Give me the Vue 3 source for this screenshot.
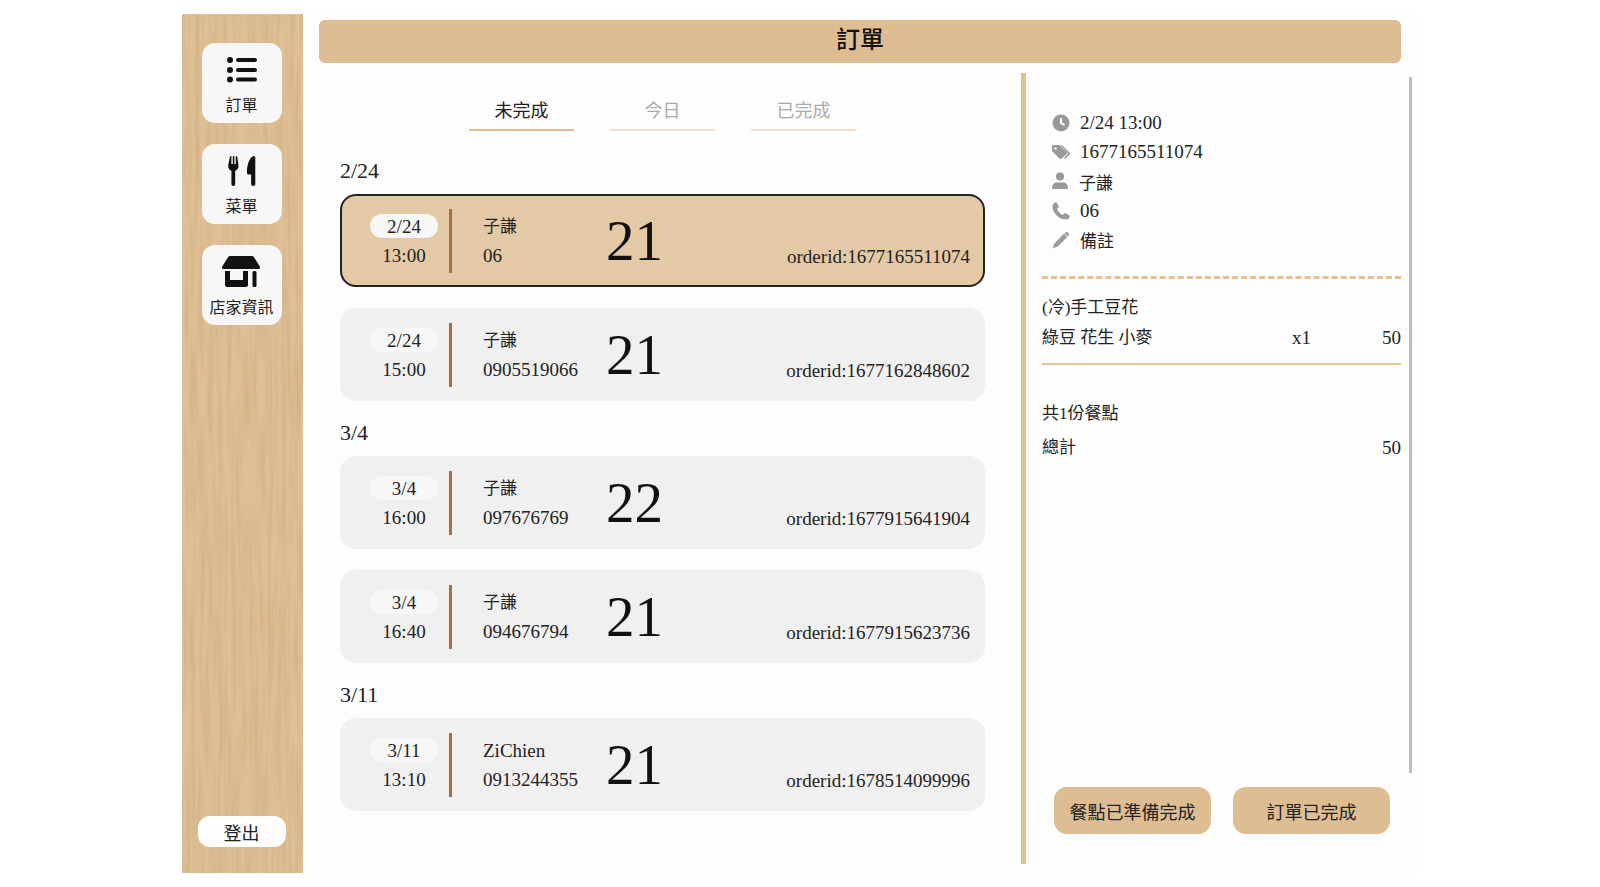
<template>
  <div class="page">
    <div class="frame">
      <aside class="sidebar">
        <svg class="grain" width="121" height="859">
          <filter id="wood">
            <feTurbulence type="fractalNoise" baseFrequency="0.22 0.012" numOctaves="3" seed="4" />
            <feColorMatrix values="0 0 0 0 0.55  0 0 0 0 0.36  0 0 0 0 0.16  0.9 0 0 0 -0.32" />
          </filter>
          <rect width="121" height="859" filter="url(#wood)" />
        </svg>
        <div class="nav-item">
          <svg class="nav-icon" viewBox="0 0 40 34">
            <g transform="translate(0 -1)">
              <circle cx="8" cy="7" r="3" />
              <circle cx="8" cy="17" r="3" />
              <circle cx="8" cy="26.5" r="3" />
              <rect x="14" y="5" width="21" height="4" rx="2" />
              <rect x="14" y="15" width="21" height="4" rx="2" />
              <rect x="14" y="24.5" width="21" height="4" rx="2" />
            </g>
          </svg>
          <span>訂單</span>
        </div>
        <div class="nav-item">
          <svg class="nav-icon" viewBox="0 0 40 34">
            <path d="M8 1.500c0-.8 1.400-.8 1.400 0V9h1.400V1.500c0-.8 1.600-.8 1.600 0V9h1.400V1.500c0-.8 1.400-.8 1.400 0l1.300 9c.3 2.600-1.100 4.400-3.300 5.300V29a1.900 1.900 0 0 1-3.800 0V15.800c-2.200-.9-3.500-2.700-3.200-5.300z" />
            <path d="M31.500 1c1 0 1.800.7 1.800 1.700V29a2.100 2.100 0 0 1-4.200 0V19.500h-2.400c-1.100 0-1.800-.7-1.800-1.800C25 9 27.500 2.500 31.500 1z" />
          </svg>
          <span>菜單</span>
        </div>
        <div class="nav-item">
          <svg class="nav-icon" viewBox="0 0 40 34">
            <g transform="translate(-1 -2)">
              <path d="M9 2h22c.8 0 1.400.4 1.800 1l6 9.500c.6 1 .2 2.500-1.300 2.500H2.500C1 15 .6 13.500 1.200 12.500l6-9.500C7.600 2.400 8.200 2 9 2z" />
              <path d="M4 17h5v9h13v-9h5v14c0 1.200-.8 2-2 2H6c-1.200 0-2-.8-2-2z" />
              <rect x="31.500" y="17" width="4" height="16" rx="1.500" />
            </g>
          </svg>
          <span>店家資訊</span>
        </div>
        <button class="logout">登出</button>
      </aside>

      <main class="main">
        <header class="title">訂單</header>
        <div class="content">
          <section class="orders">
            <div class="tabs">
              <div
                v-for="tab in tabs"
                :key="tab"
                class="tab"
                :class="{ active: tab === '未完成' }"
              >{{ tab }}</div>
            </div>

            <div v-for="group in groups" :key="group.date" class="group">
              <div class="group-date">{{ group.date }}</div>
              <div
                v-for="order in group.orders"
                :key="order.id"
                class="card"
                :class="{ selected: order.id === '1677165511074' }"
              >
                <div class="when">
                  <span class="pill">{{ group.date }}</span>
                  <span class="time">{{ order.time }}</span>
                </div>
                <div class="who">
                  <span :class="{ cjk: order.name === '子謙' }">{{ order.name }}</span>
                  <span>{{ order.phone }}</span>
                </div>
                <div class="count">{{ order.count }}</div>
                <div class="order-id">orderid:{{ order.id }}</div>
              </div>
            </div>
          </section>

          <section class="detail">
            <div class="scrollbar"></div>
            <ul class="info">
              <li>
                <svg class="info-icon" viewBox="0 0 18 18">
                  <path fill-rule="evenodd" d="M9 .5a8.500 8.500 0 1 1 0 17 8.500 8.500 0 0 1 0-17zM8 4v5.500l4 2.600 1-1.500-3-2V4z" />
                </svg>
                <span>2/24 13:00</span>
              </li>
              <li>
                <svg class="info-icon" viewBox="0 0 18 18">
                  <path fill-rule="evenodd" d="M0 3.500C0 2.700.7 2 1.500 2H7c.4 0 .8.200 1 .4l6.500 6.600c.6.600.6 1.500 0 2.100l-4.900 4.500c-.6.600-1.500.6-2.100 0L.5 8.500C.2 8.200 0 7.800 0 7.400zM3.500 4.200a1.300 1.300 0 1 0 0 2.600 1.300 1.300 0 0 0 0-2.600z" />
                  <path d="M10 2l7.500 7.600c.6.600.6 1.500 0 2.100L13 16l-1-1 4-4.400L8.500 2z" />
                </svg>
                <span>1677165511074</span>
              </li>
              <li>
                <svg class="info-icon" viewBox="0 0 18 18">
                  <circle cx="8" cy="4.500" r="4" />
                  <path d="M1 17c-.6 0-1-.4-1-1 0-3.500 2.500-5.500 5-5.500h6c2.500 0 5 2 5 5.500 0 .6-.4 1-1 1z" />
                </svg>
                <span class="cjk tight">子謙</span>
              </li>
              <li>
                <svg class="info-icon" viewBox="0 0 18 18">
                  <path d="M4.500.6l2.200 3.600c.3.500.2 1-.2 1.400L5 7c.8 2.300 3.200 4.800 5.800 6l1.500-1.500c.4-.4.9-.5 1.400-.2l3.600 2.200c.5.300.7.900.4 1.400-.8 1.600-2 2.600-3.700 2.600C7 17.500.5 11 .5 4.200.5 2.500 1.500 1.200 3.100.4c.5-.3 1.100-.1 1.400.2z" />
                </svg>
                <span>06</span>
              </li>
              <li>
                <svg class="info-icon" viewBox="0 0 18 18">
                  <path d="M12 2.800l3.200 3.200L6 15.200c-.3.300-.6.500-1 .6L.6 17.400 2.200 13c.1-.4.300-.7.600-1z" />
                  <path d="M13.200 1.600c.8-.8 2-.8 2.800 0l.4.400c.8.800.8 2 0 2.800l-.6.600-3.200-3.200z" />
                </svg>
                <span class="cjk">備註</span>
              </li>
            </ul>

            <div class="item">
              <div class="cjk">(冷)手工豆花</div>
              <div class="item-row">
                <span class="item-opts cjk">綠豆 花生 小麥</span>
                <span class="item-qty">x1</span>
                <span class="item-price">50</span>
              </div>
            </div>

            <div class="summary cjk">共1份餐點</div>
            <div class="total">
              <span class="cjk">總計</span>
              <span>50</span>
            </div>

            <div class="actions">
              <button class="action">餐點已準備完成</button>
              <button class="action">訂單已完成</button>
            </div>
          </section>
        </div>
      </main>
    </div>
  </div>
</template>

<script setup>
const tabs = ['未完成', '今日', '已完成']

const groups = [
  {
    date: '2/24',
    orders: [
      { time: '13:00', name: '子謙', phone: '06', count: 21, id: '1677165511074' },
      { time: '15:00', name: '子謙', phone: '0905519066', count: 21, id: '1677162848602' }
    ]
  },
  {
    date: '3/4',
    orders: [
      { time: '16:00', name: '子謙', phone: '097676769', count: 22, id: '1677915641904' },
      { time: '16:40', name: '子謙', phone: '094676794', count: 21, id: '1677915623736' }
    ]
  },
  {
    date: '3/11',
    orders: [
      { time: '13:10', name: 'ZiChien', phone: '0913244355', count: 21, id: '1678514099996' }
    ]
  }
]
</script>

<style>
html,
body {
  margin: 0;
  background: #fff;
}
</style>

<style scoped>
.page {
  box-sizing: border-box;
  width: 1600px;
  height: 887px;
  padding: 14px 182px;
  overflow: hidden;
  font-family: "Liberation Serif", "Noto Sans CJK TC", serif;
  font-size: 19px;
  color: #222;
}

.frame {
  display: flex;
  height: 859px;
  background: #fdfdfd;
}

.cjk {
  font-size: 17px;
}

/* sidebar */
.sidebar {
  flex: 0 0 121px;
  position: relative;
  overflow: hidden;
  display: flex;
  flex-direction: column;
  align-items: center;
  padding: 29px 2px 26px 0;
  box-sizing: border-box;
  background-color: #e0bf96;
}

.grain {
  position: absolute;
  top: 0;
  left: 0;
}

.nav-item {
  position: relative;
  box-sizing: border-box;
  width: 80px;
  height: 80px;
  margin-bottom: 21px;
  padding-top: 11px;
  display: flex;
  flex-direction: column;
  align-items: center;
  border-radius: 13px;
  background: #f7f7f7;
  font-size: 16px;
  line-height: 22px;
  color: #222;
}

.nav-icon {
  width: 40px;
  height: 34px;
  margin-bottom: 7px;
  fill: #111;
}

.logout {
  position: relative;
  margin-top: auto;
  width: 88px;
  height: 31px;
  padding: 0;
  border: none;
  border-radius: 12px;
  background: #fdfdfd;
  font: inherit;
  font-size: 18px;
  color: #222;
}

/* main */
.main {
  flex: 1;
  min-width: 0;
  display: flex;
  flex-direction: column;
  padding: 6px 17px 0 16px;
}

.title {
  height: 43px;
  flex: none;
  border-radius: 6px;
  background: #dfbd92;
  text-align: center;
  font-size: 24px;
  font-weight: 500;
  line-height: 40px;
  color: #111;
}

.content {
  flex: 1;
  min-height: 0;
  display: flex;
  margin-top: 10px;
  margin-bottom: 9px;
}

/* order list */
.orders {
  width: 645px;
  margin-left: 21px;
  margin-right: 36px;
  flex: none;
}

.tabs {
  display: flex;
  justify-content: center;
  gap: 36px;
  padding-top: 21px;
}

.tab {
  box-sizing: border-box;
  width: 105px;
  height: 37px;
  border-bottom: 2px solid #f3e1cb;
  text-align: center;
  font-size: 18px;
  line-height: 34px;
  color: #aaa;
}

.tab.active {
  border-bottom-color: #dfbd92;
  color: #222;
}

.group {
  margin-top: 27px;
}

.group + .group {
  margin-top: 19px;
}

.group-date {
  font-size: 22px;
  line-height: 26px;
  margin-bottom: 10px;
  color: #222;
}

.card {
  box-sizing: border-box;
  height: 93px;
  display: flex;
  align-items: center;
  position: relative;
  padding: 0 15px 0 30px;
  border-radius: 16px;
  background: #f0f0f0;
  color: #222;
}

.card + .card {
  margin-top: 21px;
}

.card.selected {
  border: 2px solid #222;
  padding: 0 13px 0 28px;
  background: #e4c9a6;
}

.when {
  box-sizing: border-box;
  width: 82px;
  height: 64px;
  padding-right: 11px;
  margin-right: 31px;
  display: flex;
  flex-direction: column;
  align-items: center;
  justify-content: space-between;
  border-right: 3px solid #a67239;
  line-height: 24px;
}

.pill {
  align-self: stretch;
  margin-top: 5px;
  height: 24px;
  border-radius: 12px;
  background: #f7f7f7;
  text-align: center;
  line-height: 25px;
}

.time {
  margin-bottom: 5px;
}

.who {
  width: 123px;
  height: 64px;
  display: flex;
  flex-direction: column;
  justify-content: space-between;
  padding: 6px 0 5px;
  box-sizing: border-box;
  line-height: 24px;
  white-space: nowrap;
}

.count {
  font-size: 57px;
  line-height: 64px;
  color: #111;
}

.order-id {
  margin-left: auto;
  align-self: flex-end;
  margin-bottom: 18px;
  line-height: 24px;
}

.selected .order-id {
  margin-bottom: 16px;
}

/* order detail */
.detail {
  flex: 1;
  min-width: 0;
  position: relative;
  padding-left: 16px;
  border-left: 5px solid #e3c08f;
  display: flex;
  flex-direction: column;
}

.scrollbar {
  position: absolute;
  top: 4px;
  right: -11px;
  width: 3px;
  height: 696px;
  background: #bdbdbd;
}

.info {
  list-style: none;
  margin: 0;
  padding: 35px 0 22px 10px;
  border-bottom: 3px dashed #e3c08f;
}

.info li {
  display: flex;
  align-items: center;
  height: 29.300px;
}

.info-icon {
  flex: none;
  width: 18px;
  height: 18px;
  margin-right: 10px;
  fill: #999;
}

.tight {
  margin-left: -1px;
}

.item {
  padding: 14px 0 10px;
  border-bottom: 2px solid #e6c59d;
  line-height: 30px;
}

.item-row {
  display: flex;
}

.item-opts {
  flex: 1;
}

.item-qty {
  width: 109px;
}

.item-price {
  width: 0;
  flex: none;
  display: flex;
  justify-content: flex-end;
}

.summary {
  margin-top: 35px;
  line-height: 28px;
}

.total {
  display: flex;
  justify-content: space-between;
  margin-top: 6px;
  line-height: 28px;
}

.actions {
  margin-top: auto;
  margin-bottom: 30px;
  padding: 0 11px 0 12px;
  display: flex;
  justify-content: space-between;
}

.action {
  width: 157px;
  height: 47px;
  padding: 0;
  border: none;
  border-radius: 13px;
  background: #dfbd92;
  font: inherit;
  font-size: 18px;
  color: #222;
}
</style>
